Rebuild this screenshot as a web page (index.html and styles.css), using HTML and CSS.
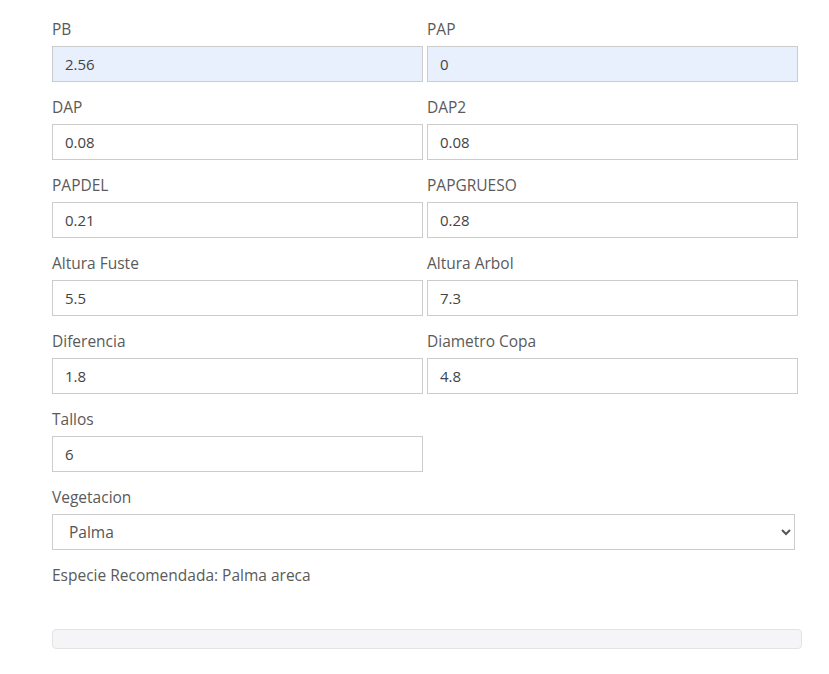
FILE: index.html
```html
<!DOCTYPE html>
<html lang="es">
<head>
<meta charset="utf-8">
<title>Formulario</title>
<link rel="stylesheet" href="styles.css">
</head>
<body>
<div class="page">
  <form class="form">
    <div class="grid">
      <div class="field"><label class="label">PB</label><input class="input autofill" value="2.56"></div>
      <div class="field"><label class="label">PAP</label><input class="input autofill" value="0"></div>
      <div class="field"><label class="label">DAP</label><input class="input" value="0.08"></div>
      <div class="field"><label class="label">DAP2</label><input class="input" value="0.08"></div>
      <div class="field"><label class="label">PAPDEL</label><input class="input" value="0.21"></div>
      <div class="field"><label class="label">PAPGRUESO</label><input class="input" value="0.28"></div>
      <div class="field"><label class="label">Altura Fuste</label><input class="input" value="5.5"></div>
      <div class="field"><label class="label">Altura Arbol</label><input class="input" value="7.3"></div>
      <div class="field"><label class="label">Diferencia</label><input class="input" value="1.8"></div>
      <div class="field"><label class="label">Diametro Copa</label><input class="input" value="4.8"></div>
      <div class="field"><label class="label">Tallos</label><input class="input" value="6"></div>
    </div>
    <div class="field wide"><label class="label">Vegetacion</label>
      <select class="select"><option>Palma</option><option>Arbol</option></select>
    </div>
    <p class="result">Especie Recomendada: Palma areca</p>
    <div class="bar"></div>
  </form>
</div>
</body>
</html>
```
FILE: styles.css
```css
html, body { margin: 0; padding: 0; background: #fff; }
body { font-family: "Open Sans", Lato, sans-serif; font-size: 15.5px; color: #555; }
.page { padding: 18px 0 0 52px; }
.form { width: 750px; }
.grid { display: grid; grid-template-columns: 371px 371px; column-gap: 4px; row-gap: 14px; }
.field { display: flex; flex-direction: column; }
.label { line-height: 22px; margin-bottom: 6px; color: #5a5a5a; }
.input {
  height: 36px; box-sizing: border-box; border: 1px solid #ccc; border-radius: 0;
  padding: 0 12px; font: inherit; font-size: 15px; color: #444; background: #fff; outline: none;
}
.input.autofill { background: #e8f0fe; }
.wide { margin-top: 14px; width: 743px; }
.select {
  height: 36px; box-sizing: border-box; border: 1px solid #ccc; border-radius: 0;
  padding: 0 12px; font: inherit; font-size: 15.5px; color: #555; background: #fff;
}
.result { margin: 14px 0 0; line-height: 22px; color: #5a5a5a; }
.bar { margin-top: 43px; height: 20px; box-sizing: border-box; border: 1px solid #e3e3e3; border-radius: 4px; background: #f5f5f7; }
```
